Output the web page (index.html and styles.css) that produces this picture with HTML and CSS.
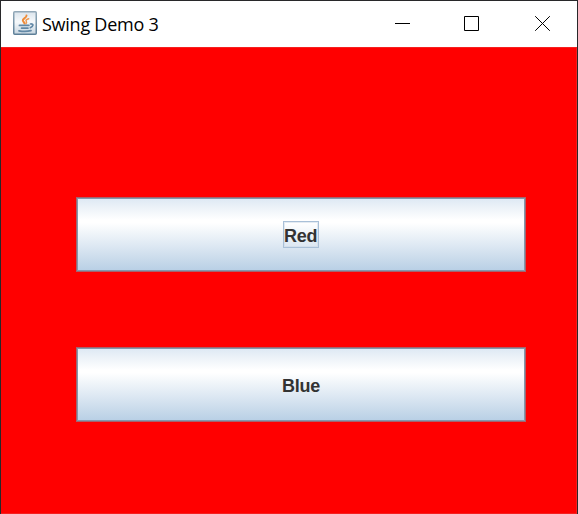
FILE: index.html
```html
<!DOCTYPE html>
<html lang="en">
<head>
<meta charset="utf-8">
<title>Swing Demo 3</title>
<link rel="stylesheet" href="styles.css">
</head>
<body>
<div class="window">
  <header class="titlebar">
    <svg class="app-icon" width="24" height="24" viewBox="0 0 24 24">
      <defs>
        <linearGradient id="tile" x1="0" y1="0" x2="0" y2="1">
          <stop offset="0" stop-color="#dbe4ec"/>
          <stop offset=".45" stop-color="#f6f9fb"/>
          <stop offset="1" stop-color="#c6d5e0"/>
        </linearGradient>
        <linearGradient id="edge" x1="0" y1="0" x2="0" y2="1">
          <stop offset="0" stop-color="#93a9b8"/>
          <stop offset="1" stop-color="#5d7f98"/>
        </linearGradient>
      </defs>
      <rect x=".75" y=".75" width="22.5" height="22.5" rx="1" fill="url(#tile)" stroke="url(#edge)" stroke-width="1.5"/>
      <g fill="none" stroke-linecap="round">
        <path d="M13.5 4.5C13.8 6.8 9.4 7.4 9.8 9.6C10.1 10.8 11.4 11.3 11.6 12.6" stroke="#ee8c3a" stroke-width="2"/>
        <path d="M15.7 7.7C13 8.6 12.6 9.5 13.3 10.4C13.9 11.2 13.6 11.8 13 12.6" stroke="#ee9850" stroke-width="1.5"/>
        <path d="M6.5 14.4H15.8" stroke="#6288a6" stroke-width="1.9"/>
        <path d="M8.5 17.1H15" stroke="#6288a6" stroke-width="1.7"/>
        <path d="M17.5 13C21 12.6 20.5 15.4 17.3 16.7" stroke="#6288a6" stroke-width="1.7"/>
        <path d="M6 19.8C9 20.4 15 20.4 18 19.6" stroke="#6389a6" stroke-width="1.8"/>
      </g>
    </svg>
    <h1 class="title">Swing Demo 3</h1>
    <svg class="control" width="15" height="15" viewBox="0 0 15 15"><path d="M0 7.5H15"/></svg>
    <svg class="control" width="15" height="15" viewBox="0 0 15 15"><path d="M.5 .5H14.5V14.5H.5Z"/></svg>
    <svg class="control close" width="15" height="15" viewBox="0 0 15 15"><path d="M.2 .2L14.8 14.8M14.8 .2L.2 14.8"/></svg>
  </header>
  <main class="content">
    <button class="metal-button"><span class="label focused">Red</span></button>
    <button class="metal-button"><span class="label">Blue</span></button>
  </main>
</div>
</body>
</html>
```

FILE: styles.css
```css
* { box-sizing: border-box; }

body { margin: 0; overflow: hidden; }

.window {
  display: flex;
  flex-direction: column;
  width: 578px;
  height: 514px;
  border: 1px solid #28282a;
  border-bottom: 0;
  background: #fff;
}

.titlebar {
  display: flex;
  height: 46px;
  padding: 10px 27px 0 12px;
}

.app-icon { flex: none; }

.title {
  flex: 1;
  margin: 0 0 0 5px;
  font: 400 18px/27px "Open Sans", "Noto Sans", sans-serif;
  letter-spacing: -.25px;
  white-space: nowrap;
  color: #000;
}

.control {
  flex: none;
  margin: 5px 0 0 54px;
  fill: none;
  stroke: #000;
  stroke-width: 1;
}

.close { margin-left: 56px; }

.content {
  display: flex;
  flex: 1;
  flex-direction: column;
  gap: 75px;
  padding: 149px 50px 0 75px;
  border: solid #f52020;
  border-width: 1px 1px 1px 0;
  background: #f00;
}

.metal-button {
  display: flex;
  align-items: center;
  justify-content: center;
  width: 450px;
  height: 75px;
  padding: 0;
  border: 1px solid #a4646f;
  outline: 1px solid #8299ad;
  outline-offset: -2px;
  border-radius: 0;
  background: linear-gradient(#dde8f3 0%, #fff 30%, #fff 34%, #b8cfe5 100%);
}

.label {
  padding-top: 2px;
  font: 700 18px/24px "Liberation Sans", Arial, sans-serif;
  letter-spacing: -.2px;
  color: #333;
}

.focused {
  width: 36px;
  height: 27px;
  border: 1px solid #a9c0d8;
  box-shadow: inset 0 0 0 1px #c9d8e680;
  text-align: left;
}
```
